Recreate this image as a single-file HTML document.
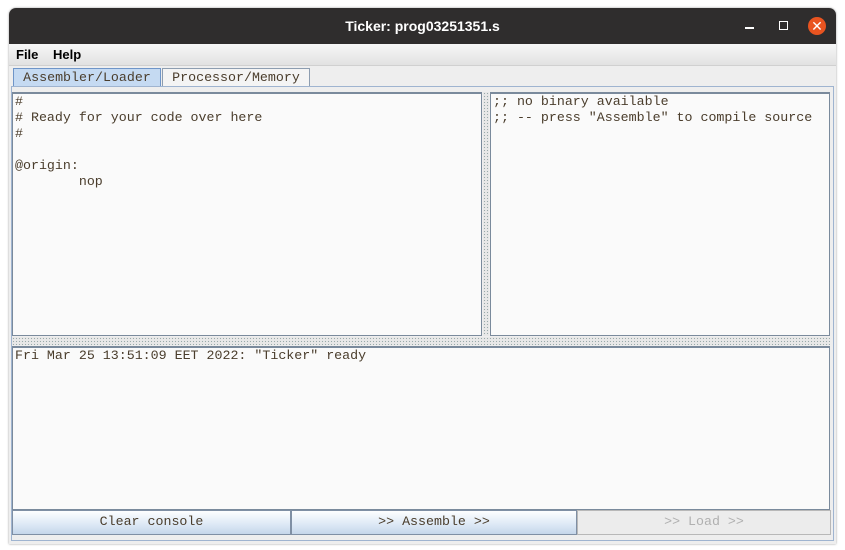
<!DOCTYPE html>
<html><head><style>
body{margin:0;width:845px;height:550px;background:#fff;position:relative;overflow:hidden;font-family:"Liberation Sans",sans-serif}
.win{position:absolute;left:9px;top:8px;width:827px;height:536px;background:#eeeeee;border-radius:7px 7px 0 0;overflow:hidden;box-shadow:0 0 2px rgba(0,0,0,.4)}
.title{position:absolute;left:0;top:0;width:827px;height:36px;background:#2f2d2d;color:#fff;font-weight:bold;font-size:14px;text-align:center;line-height:36px}
.menu{position:absolute;left:0;top:36px;width:827px;height:21px;background:linear-gradient(#f7f7f7,#e2e2e2);border-bottom:1px solid #d0d0d0;font-weight:bold;font-size:13px}
.menu span{position:absolute;top:3px}
.mono{font-family:"Liberation Mono",monospace;font-size:13.3px;color:#4a3d2c}
.tab{position:absolute;top:60px;height:18px;line-height:17px;box-sizing:border-box;text-align:center}
.pane{position:absolute;left:2px;top:78px;width:823px;height:455px;border:1px solid #9fb4d0;box-sizing:border-box;background:#eeeeee}
.box{position:absolute;background:#fafafa;border:1px solid #7a8a9c;border-top:2px solid #7a8a9c;box-sizing:border-box;white-space:pre;line-height:16px;padding:0 2px}
.btn{position:absolute;top:502px;height:25px;box-sizing:border-box;border:1px solid #7f8fa4;background:linear-gradient(#fdfeff,#dce8f5 60%,#c5d6ea);text-align:center;line-height:22px}
</style></head><body>
<div class="win">
<div class="title">Ticker: prog03251351.s</div>
<div style="position:absolute;left:736px;top:19px;width:9px;height:1.5px;background:#fff"></div>
<div style="position:absolute;left:770px;top:13px;width:7px;height:7px;border:1.5px solid #fff"></div>
<div style="position:absolute;left:799px;top:9px;width:18px;height:18px;border-radius:50%;background:#e95420;color:#fff;font-size:14px;text-align:center;line-height:18px">✕</div>
<div class="menu"><span style="left:7px">File</span><span style="left:44px">Help</span></div>
<div class="tab mono" style="left:4px;width:148px;background:#c5daf2;border:1px solid #6f95c8;border-bottom:none">Assembler/Loader</div>
<div class="tab mono" style="left:153px;width:148px;background:#f4f4f4;border:1px solid #8d9db0;border-bottom:none">Processor/Memory</div>
<div class="pane"></div>
<div class="box mono" style="left:3px;top:84px;width:470px;height:244px">#
# Ready for your code over here
#

@origin:
        nop</div>
<div style="position:absolute;left:474px;top:84px;width:6px;height:244px;background-image:radial-gradient(#9aa 0.6px,transparent 0.8px);background-size:3px 3px;background-color:#e8e8e8"></div>
<div class="box mono" style="left:481px;top:84px;width:340px;height:244px">;; no binary available
;; -- press "Assemble" to compile source</div>
<div style="position:absolute;left:3px;top:329px;width:818px;height:8px;background-image:radial-gradient(#9aa 0.6px,transparent 0.8px);background-size:3px 3px;background-color:#e8e8e8"></div>
<div class="box mono" style="left:3px;top:338px;width:818px;height:164px">Fri Mar 25 13:51:09 EET 2022: "Ticker" ready</div>
<div class="btn mono" style="left:3px;width:279px">Clear console</div>
<div class="btn mono" style="left:282px;width:286px">&gt;&gt; Assemble &gt;&gt;</div>
<div class="btn mono" style="left:568px;width:254px;background:#ececec;border-color:#b8b8b8;color:#b0b0b0">&gt;&gt; Load &gt;&gt;</div>
</div>
</body></html>
